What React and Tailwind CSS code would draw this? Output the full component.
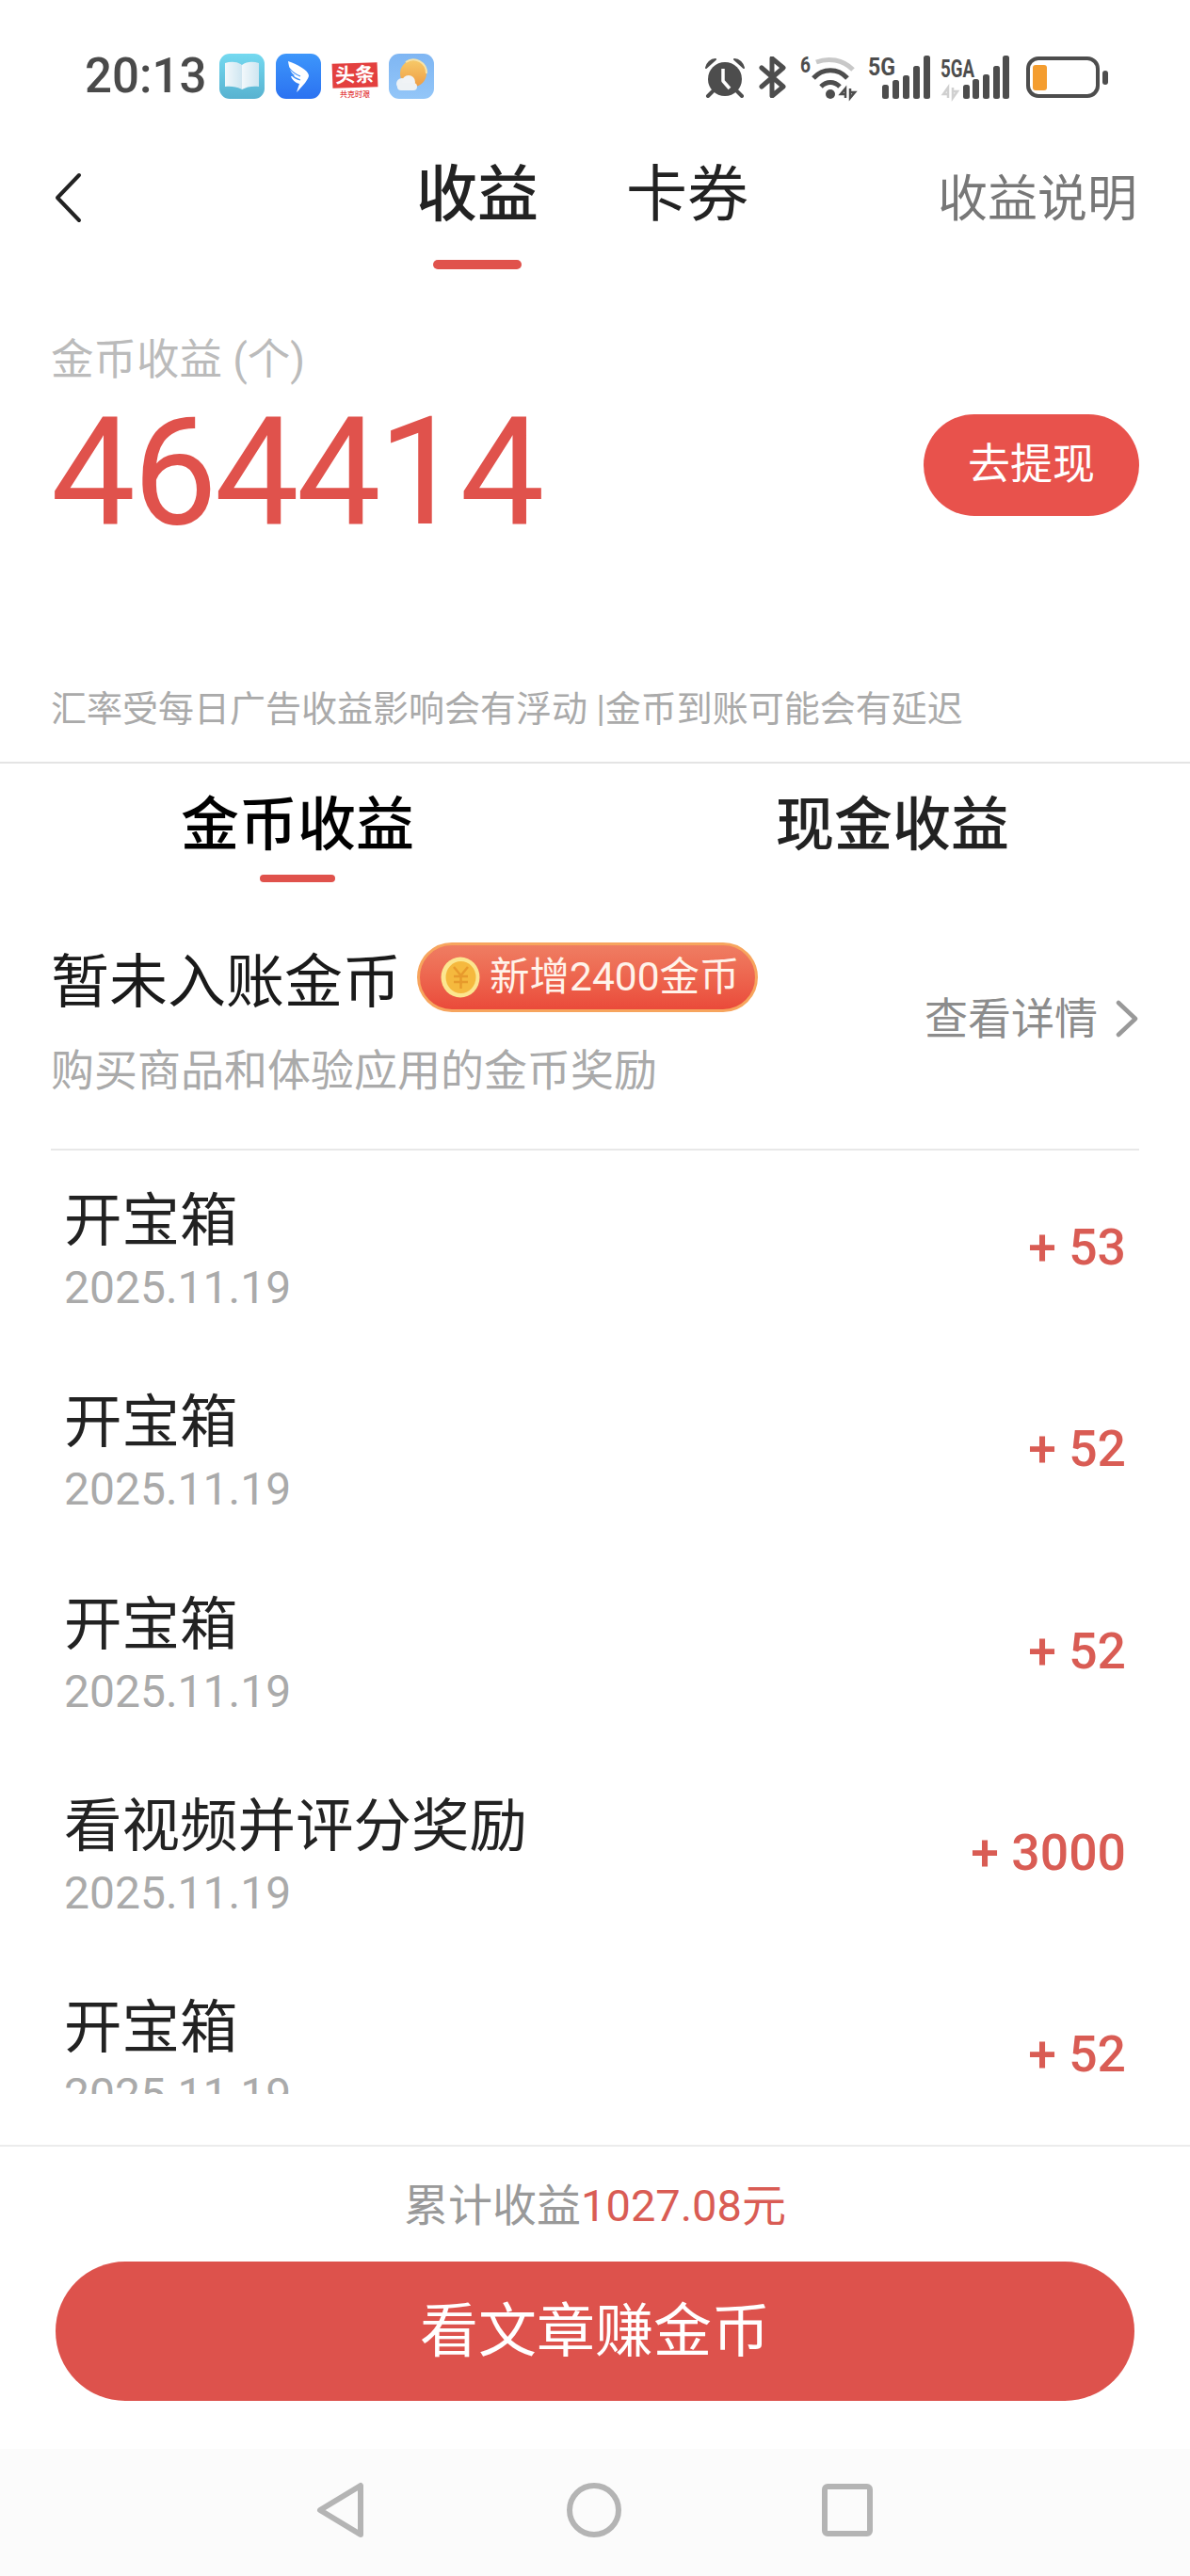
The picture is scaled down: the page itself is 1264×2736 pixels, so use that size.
import React from "react";

const sans = "font-['Roboto','Noto_Sans_CJK_SC',sans-serif]";

const records = [
  { title: "开宝箱", date: "2025.11.19", amount: "+ 53" },
  { title: "开宝箱", date: "2025.11.19", amount: "+ 52" },
  { title: "开宝箱", date: "2025.11.19", amount: "+ 52" },
  { title: "看视频并评分奖励", date: "2025.11.19", amount: "+ 3000" },
  { title: "开宝箱", date: "2025.11.19", amount: "+ 52" },
];

const BookIcon = () => (
  <svg width="48" height="48" viewBox="0 0 48 48">
    <defs>
      <linearGradient id="bookBg" x1="0" y1="0" x2="0" y2="1">
        <stop offset="0" stopColor="#74d9f0" />
        <stop offset="1" stopColor="#58b2d0" />
      </linearGradient>
      <linearGradient id="bookPage" x1="0" y1="0" x2="1" y2="0">
        <stop offset="0" stopColor="#f2f8fb" />
        <stop offset="1" stopColor="#cfe6f1" />
      </linearGradient>
    </defs>
    <rect width="48" height="48" rx="11" fill="url(#bookBg)" />
    <path d="M6 10c6-2 13-2 18 2v26c-5-3-12-4-18-3z" fill="url(#bookPage)" />
    <path d="M42 10c-6-2-13-2-18 2v26c5-3 12-4 18-3z" fill="url(#bookPage)" />
  </svg>
);

const WingIcon = () => (
  <svg width="48" height="48" viewBox="0 0 48 48">
    <defs>
      <linearGradient id="wingBg" x1="0" y1="0" x2="0" y2="1">
        <stop offset="0" stopColor="#3d96fb" />
        <stop offset="1" stopColor="#2b72f1" />
      </linearGradient>
    </defs>
    <rect width="48" height="48" rx="11" fill="url(#wingBg)" />
    <path d="M13 8c9 3 21 9 22 15 0 4-6 11-13 18l3-9c-5-1-8-5-9-8 1 0 3 0 4-1-4-2-6-8-7-15z" fill="#fff" />
    <path d="M14 15c3 4 7 7 12 9M16 22c3 3 6 5 10 6" stroke="#3d8ff8" strokeWidth="1.2" fill="none" />
  </svg>
);

const NewsIcon = () => (
  <div className="flex h-[48px] w-[48px] flex-col items-center pt-[10px]">
    <div className="flex h-[26px] w-[48px] -rotate-2 items-center justify-center bg-[#e3403f] text-[21px] leading-none font-bold text-white">
      头条
    </div>
    <div className="mt-[4px] text-[8px] leading-[8px] font-medium text-[#e3403f]">共克时艰</div>
  </div>
);

const WeatherIcon = () => (
  <svg width="48" height="48" viewBox="0 0 48 48">
    <defs>
      <linearGradient id="skyBg" x1="0" y1="0" x2="0" y2="1">
        <stop offset="0" stopColor="#7fb6f3" />
        <stop offset="1" stopColor="#93c6f8" />
      </linearGradient>
      <linearGradient id="sunFill" x1="0" y1="0" x2="0" y2="1">
        <stop offset="0" stopColor="#f7c968" />
        <stop offset="1" stopColor="#ee9d45" />
      </linearGradient>
    </defs>
    <rect width="48" height="48" rx="11" fill="url(#skyBg)" />
    <circle cx="26" cy="21" r="14" fill="url(#sunFill)" />
    <path d="M18 9a14 14 0 0 1 22 12" stroke="#f9e3a6" strokeWidth="2" fill="none" />
    <circle cx="14" cy="32" r="6" fill="#eef2f5" />
    <circle cx="21" cy="30" r="7" fill="#f0f3f6" />
    <rect x="9" y="31" width="21" height="8" rx="4" fill="#eef2f5" />
  </svg>
);

const AlarmIcon = () => (
  <svg width="44" height="44" viewBox="0 0 44 44" fill="none">
    <circle cx="22" cy="24" r="18" fill="#4d4d4d" />
    <path d="M2 12c1-5 5-9 10-9z" fill="#4d4d4d" stroke="#4d4d4d" strokeWidth="2" strokeLinejoin="round" />
    <path d="M42 12c-1-5-5-9-10-9z" fill="#4d4d4d" stroke="#4d4d4d" strokeWidth="2" strokeLinejoin="round" />
    <path d="M9 37l-5 5M35 37l5 5" stroke="#4d4d4d" strokeWidth="4" strokeLinecap="round" />
    <path d="M20 13v13l7 8" stroke="#fff" strokeWidth="3.5" strokeLinejoin="round" />
  </svg>
);

const BluetoothIcon = () => (
  <svg width="30" height="44" viewBox="0 0 30 44" fill="none" className="ml-[14px]">
    <path d="M3 12l23 20-12 10V2l12 10L3 32" stroke="#4d4d4d" strokeWidth="5" strokeLinejoin="round" strokeLinecap="round" />
  </svg>
);

const WifiIcon = () => (
  <svg width="60" height="46" viewBox="0 0 60 46" fill="none" className="ml-[14px] overflow-visible">
    <text x="0" y="18" fontSize="24" fontWeight="700" fill="#4d4d4d" fontFamily="Roboto" textLength="11" lengthAdjust="spacingAndGlyphs">6</text>
    <path d="M17 7C30 2 45 4 56 15" stroke="#c8c8c8" strokeWidth="5" />
    <path d="M14 24C24 13 40 13 50 24" stroke="#4d4d4d" strokeWidth="5" />
    <path d="M22 33C28 27 36 27 42 33" stroke="#4d4d4d" strokeWidth="5" />
    <circle cx="32" cy="41" r="5" fill="#4d4d4d" />
    <path d="M48 45V35l-5 6h5M53 35v10l5-6h-5" stroke="#4d4d4d" strokeWidth="2.5" />
  </svg>
);

const FiveGIcon = () => (
  <svg width="66" height="46" viewBox="0 0 66 46" className="ml-[12px] overflow-visible">
    <text x="0" y="21" fontSize="25" fontWeight="700" fill="#4d4d4d" fontFamily="Roboto" textLength="29" lengthAdjust="spacingAndGlyphs">5G</text>
    <rect x="15" y="31" width="7" height="15" rx="2.5" fill="#4d4d4d" />
    <rect x="26" y="26" width="7" height="20" rx="2.5" fill="#4d4d4d" />
    <rect x="37" y="21" width="7" height="25" rx="2.5" fill="#4d4d4d" />
    <rect x="48" y="11" width="7" height="35" rx="2.5" fill="#4d4d4d" />
    <rect x="59" y="0" width="7" height="46" rx="2.5" fill="#4d4d4d" />
  </svg>
);

const FiveGaIcon = () => (
  <svg width="74" height="46" viewBox="0 0 74 46" className="ml-[11px] overflow-visible">
    <text x="0" y="23" fontSize="25" fontWeight="700" fill="#4d4d4d" fontFamily="Roboto" textLength="36" lengthAdjust="spacingAndGlyphs">5GA</text>
    <path d="M8 45V34l-5 7h5M13 34v11l5-7h-5" stroke="#d0d0d0" strokeWidth="2.5" fill="none" />
    <rect x="24" y="31" width="7" height="15" rx="2.5" fill="#4d4d4d" />
    <rect x="34" y="25" width="7" height="21" rx="2.5" fill="#4d4d4d" />
    <rect x="45" y="20" width="7" height="26" rx="2.5" fill="#4d4d4d" />
    <rect x="56" y="11" width="7" height="35" rx="2.5" fill="#4d4d4d" />
    <rect x="66" y="0" width="7" height="46" rx="2.5" fill="#4d4d4d" />
  </svg>
);

const BatteryIcon = () => (
  <div className="ml-[17px] flex items-center gap-[3px]">
    <div className="flex h-[44px] w-[78px] items-center rounded-[13px] border-[4px] border-[#4d4d4d] pl-[3px]">
      <div className="h-[27px] w-[15px] rounded-[3px] bg-[#f49d2f]" />
    </div>
    <div className="h-[15px] w-[6px] rounded-[3px] bg-[#4d4d4d]" />
  </div>
);

const StatusBar = () => (
  <div className="flex h-[112px] items-end justify-between pr-[87px] pb-[7px] pl-[90px]">
    <div className="flex items-center">
      <span className="w-[143px] text-[51px] leading-[48px] font-medium text-[#4a4a4a]">20:13</span>
      <div className="flex gap-[12px]">
        <BookIcon />
        <WingIcon />
        <NewsIcon />
        <WeatherIcon />
      </div>
    </div>
    <div className="flex items-center">
      <AlarmIcon />
      <BluetoothIcon />
      <WifiIcon />
      <FiveGIcon />
      <FiveGaIcon />
      <BatteryIcon />
    </div>
  </div>
);

const NavBar = () => (
  <div className="flex h-[176px] items-start pr-[56px] pl-[57px]">
    <svg width="30" height="54" viewBox="0 0 30 54" fill="none" className="mt-[71px]">
      <path d="M27 3L4 27l23 24" stroke="#222" strokeWidth="4" strokeLinecap="round" strokeLinejoin="round" />
    </svg>
    <div className="ml-[355px] flex flex-col items-center">
      <span className="mt-[52px] text-[65px] leading-[86px] font-medium text-[#222]">收益</span>
      <div className="mt-[26px] h-[10px] w-[94px] rounded-full bg-[#e0524c]" />
    </div>
    <span className="mt-[52px] ml-[93px] text-[65px] leading-[86px] text-[#222]">卡券</span>
    <span className="mt-[65px] ml-auto text-[53px] leading-[70px] text-[#777]">收益说明</span>
  </div>
);

const BalanceBlock = () => (
  <div className="h-[523px] border-b-2 border-[#e4e4e4] px-[54px]">
    <div className="pt-[64px] text-[45.5px] leading-[62px] text-[#bbb]">金币收益 (个)</div>
    <div className="flex h-[160px] items-start justify-between">
      <span className="mt-[28px] text-[160px] leading-[120px] font-normal tracking-[-3px] text-[#e0524c]">464414</span>
      <div className="mt-[26px] flex h-[108px] w-[229px] items-center justify-center rounded-full bg-[#e8524c] text-[45px] text-white">
        去提现
      </div>
    </div>
    <div className="mt-[154px] text-[38px] leading-[50px] text-[#aaa]">
      汇率受每日广告收益影响会有浮动 |金币到账可能会有延迟
    </div>
  </div>
);

const Tabs = () => (
  <div className="flex h-[128px]">
    <div className="flex w-[632px] flex-col items-center">
      <span className="pt-[25px] text-[62px] leading-[82px] font-medium text-black">金币收益</span>
      <div className="mt-[11px] h-[8px] w-[80px] rounded-full bg-[#e0524c]" />
    </div>
    <div className="flex w-[632px] flex-col items-center">
      <span className="pt-[25px] text-[62px] leading-[82px] font-medium text-[#222]">现金收益</span>
    </div>
  </div>
);

const CoinIcon = () => (
  <svg width="42" height="44" viewBox="0 0 42 44" fill="none">
    <ellipse cx="21" cy="22" rx="20.5" ry="21.5" fill="#fce68f" />
    <ellipse cx="21.5" cy="22" rx="16" ry="17" fill="#f5b93e" />
    <path d="M14 11l7.5 9 7.5-9M21.5 20v14M14 21h15M14 27h15" stroke="#e79a2c" strokeWidth="2.5" />
  </svg>
);

const PendingRow = () => (
  <div className="mx-[54px] flex h-[283px] items-start justify-between border-b-2 border-[#e8e8e8]">
    <div className="mt-[62px]">
      <div className="flex items-center">
        <span className="text-[62px] leading-[82px] text-[#1a1a1a]">暂未入账金币</span>
        <div className="mb-[11px] ml-[17px] flex h-[74px] items-center rounded-full border-[3px] border-[#f7a55e] bg-gradient-to-b from-[#ef7d62] to-[#ea4a3a] pr-[16px] pl-[22px]">
          <CoinIcon />
          <span className="ml-[10px] text-[42.5px] leading-none text-[#fff3ea]">新增2400金币</span>
        </div>
      </div>
      <div className="mt-[20px] text-[46px] leading-[62px] text-[#aaa]">购买商品和体验应用的金币奖励</div>
    </div>
    <div className="mt-[112px] flex items-center">
      <span className="text-[46px] leading-[62px] text-[#8c8c8c]">查看详情</span>
      <svg width="26" height="40" viewBox="0 0 26 40" fill="none" className="ml-[18px]">
        <path d="M4 3l18 17L4 37" stroke="#999" strokeWidth="4.5" strokeLinecap="round" strokeLinejoin="round" />
      </svg>
    </div>
  </div>
);

const RecordRow = ({ title, date, amount }) => (
  <div className="flex h-[214.3px] shrink-0 items-center justify-between px-[14px]">
    <div className="pb-[2px]">
      <div className="text-[61.5px] leading-[82px] text-[#222]">{title}</div>
      <div className="-mt-[2px] text-[48px] leading-[64px] text-[#aaa]">{date}</div>
    </div>
    <span className="pb-[8px] text-[53.5px] font-medium text-[#d95c54]">{amount}</span>
  </div>
);

const Footer = () => (
  <div className="flex h-[323px] flex-col items-center border-t-2 border-[#ececec]">
    <div className="pt-[32px] text-[47px] leading-[62px] text-[#999]">
      累计收益<span className="text-[#d95c54]">1027.08元</span>
    </div>
    <div className="mt-[28px] flex h-[148px] w-[1146px] items-center justify-center rounded-full bg-[#dd524c] text-[62px] text-white">
      看文章赚金币
    </div>
  </div>
);

const SystemNav = () => (
  <div className="flex h-[135px] items-center bg-[#fbfbfb] pb-[6px] pl-[335px]">
    <svg width="52" height="60" viewBox="0 0 52 60" fill="none">
      <path d="M48 4v52L5 30z" stroke="#b4b4b4" strokeWidth="6" strokeLinejoin="round" />
    </svg>
    <svg width="60" height="60" viewBox="0 0 60 60" fill="none" className="ml-[214px]">
      <circle cx="30" cy="30" r="26" stroke="#b4b4b4" strokeWidth="6" />
    </svg>
    <svg width="54" height="56" viewBox="0 0 54 56" fill="none" className="ml-[212px]">
      <rect x="3" y="3" width="48" height="50" rx="3" stroke="#b4b4b4" strokeWidth="6" />
    </svg>
  </div>
);

export default function App() {
  return (
    <div className={`flex h-[2736px] w-[1264px] flex-col overflow-hidden bg-white ${sans}`}>
      <StatusBar />
      <NavBar />
      <BalanceBlock />
      <Tabs />
      <PendingRow />
      <div className="mx-[54px] flex h-[1002px] flex-col overflow-hidden">
        {records.map((r, idx) => (
          <RecordRow key={idx} title={r.title} date={r.date} amount={r.amount} />
        ))}
      </div>
      <div className="h-[54px]" />
      <Footer />
      <SystemNav />
    </div>
  );
}
